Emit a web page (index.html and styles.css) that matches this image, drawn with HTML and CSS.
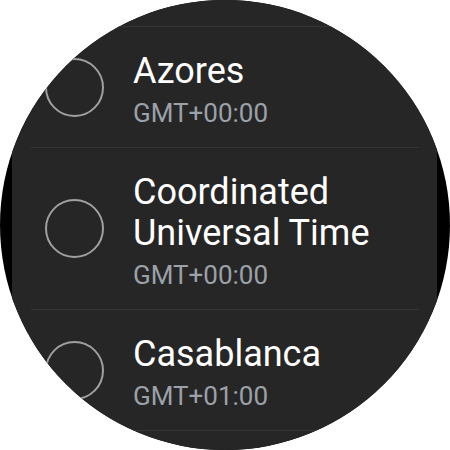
FILE: index.html
```html
<!DOCTYPE html>
<html lang="en">
<head>
  <meta charset="UTF-8" />
  <meta name="viewport" content="width=device-width, initial-scale=1.0" />
  <title>Time zone</title>
  <link rel="stylesheet" href="styles.css">
</head>
<body>
  <div class="watch">
    <div class="panel">
      <ul class="zone-list">
        <li class="zone">
          <span class="radio"></span>
          <div class="zone-text">
            <div class="zone-name">Azores</div>
            <div class="zone-offset">GMT+00:00</div>
          </div>
        </li>
        <li class="zone">
          <span class="radio"></span>
          <div class="zone-text">
            <div class="zone-name">Coordinated Universal Time</div>
            <div class="zone-offset">GMT+00:00</div>
          </div>
        </li>
        <li class="zone">
          <span class="radio"></span>
          <div class="zone-text">
            <div class="zone-name">Casablanca</div>
            <div class="zone-offset">GMT+01:00</div>
          </div>
        </li>
      </ul>
      <div class="list-end"></div>
    </div>
  </div>
</body>
</html>
```

FILE: styles.css
```css
body {
  margin: 0;
  background: #fff;
  font-family: Roboto, 'Liberation Sans', sans-serif;
}

.watch {
  width: 450px;
  height: 450px;
  border-radius: 50%;
  background: #000;
  overflow: hidden;
}

.panel {
  height: 100%;
  margin: 0 13px 0 12px;
  background: #262626;
  overflow: hidden;
}

.zone-list {
  list-style: none;
  margin: 0;
  padding: 26px 0 0;
}

.zone {
  display: flex;
  align-items: center;
  margin: 0 18px 0 19px;
  padding-left: 14px;
  border-top: 1px solid #363636;
}

/* divider under the last visible row */
.list-end {
  margin: 0 18px 0 19px;
  border-top: 1px solid #363636;
}

.radio {
  flex: none;
  width: 55px;
  height: 55px;
  border: 2px solid #a0a0a0;
  border-radius: 50%;
  margin-right: 29px;
}

.zone-text {
  min-width: 0;
  padding: 24px 0 12px;
}

.zone-name {
  font-size: 36px;
  line-height: 41px;
  color: #fff;
}

.zone-offset {
  font-size: 26px;
  line-height: 43px;
  color: #9ba1a8;
}
```
